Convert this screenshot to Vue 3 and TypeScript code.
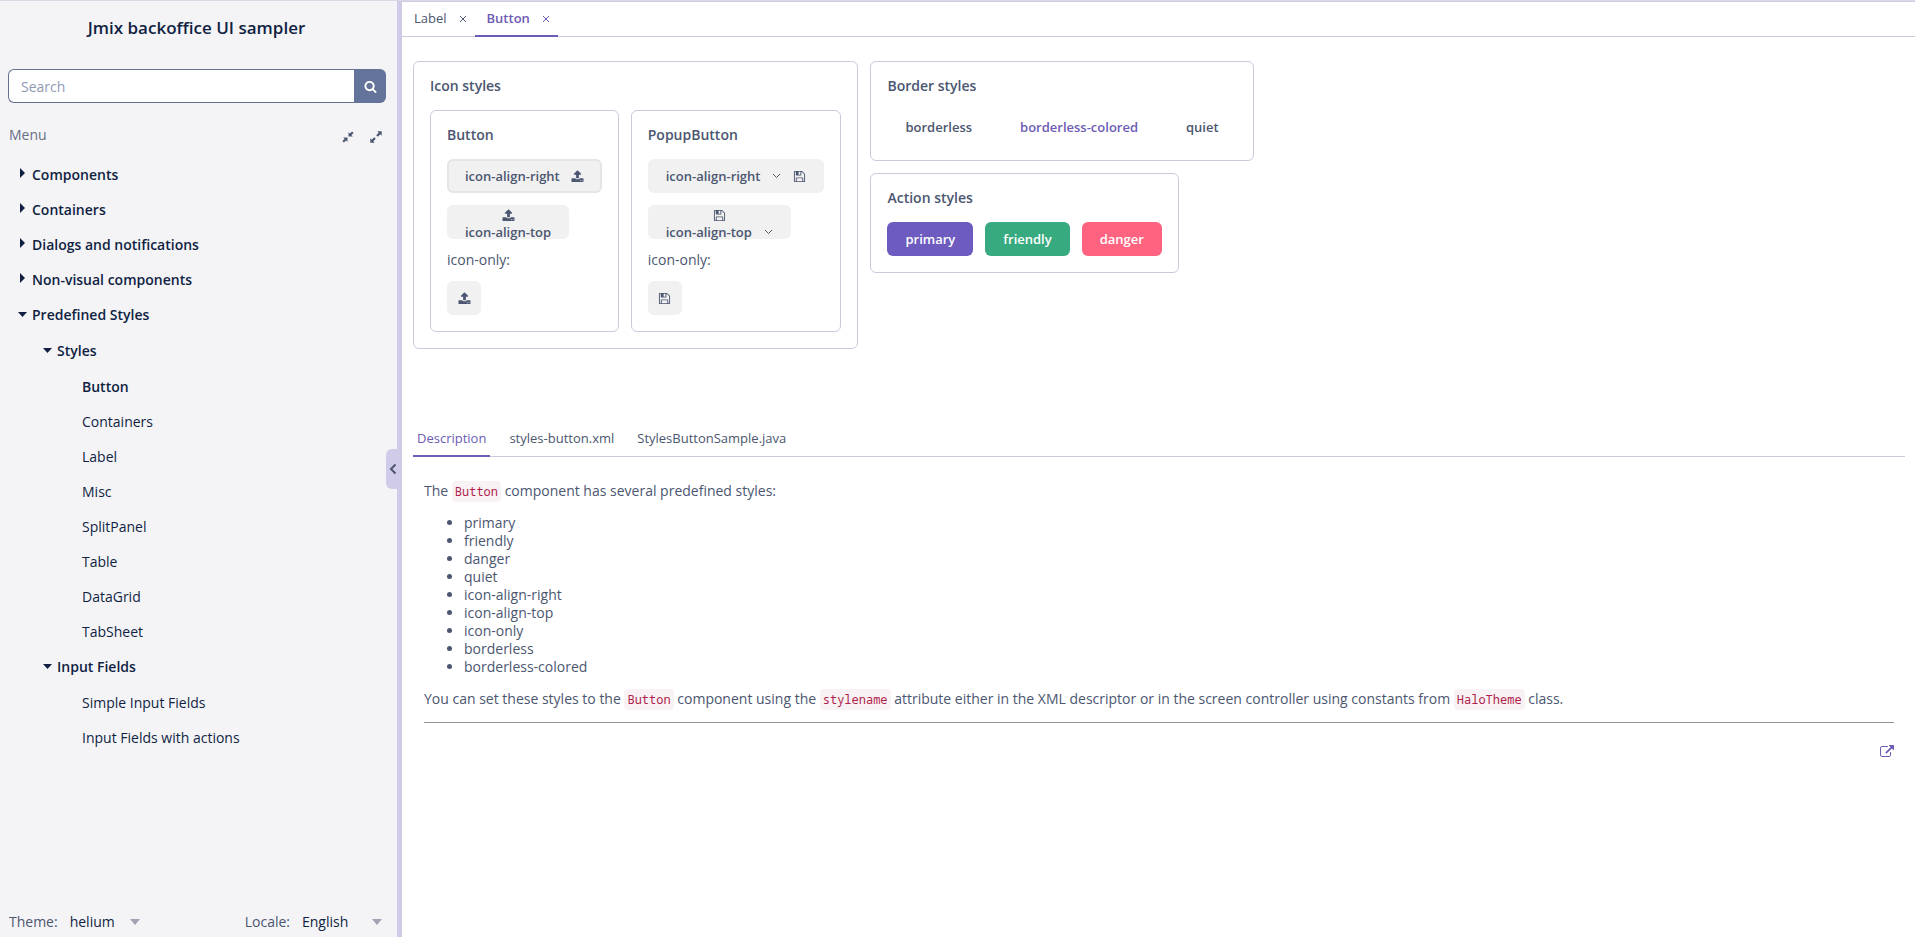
<script setup lang="ts">
import { ref } from 'vue'

interface TreeNode {
  label: string
  children?: TreeNode[]
}

interface Row {
  label: string
  depth: number
  kind: 'open' | 'closed' | 'leaf'
  first: boolean
}

const tree: TreeNode[] = [
  { label: 'Components', children: [] },
  { label: 'Containers', children: [] },
  { label: 'Dialogs and notifications', children: [] },
  { label: 'Non-visual components', children: [] },
  {
    label: 'Predefined Styles',
    children: [
      {
        label: 'Styles',
        children: ['Button', 'Containers', 'Label', 'Misc', 'SplitPanel', 'Table', 'DataGrid', 'TabSheet'].map(
          (label) => ({ label }),
        ),
      },
      {
        label: 'Input Fields',
        children: [{ label: 'Simple Input Fields' }, { label: 'Input Fields with actions' }],
      },
    ],
  },
]

function flatten(nodes: TreeNode[], depth: number): Row[] {
  return nodes.flatMap((node, index) => {
    const kind: Row['kind'] = !node.children ? 'leaf' : node.children.length ? 'open' : 'closed'
    const row: Row = { label: node.label, depth, kind, first: depth > 0 && index === 0 }
    return [row, ...flatten(node.children ?? [], depth + 1)]
  })
}

const rows = flatten(tree, 0)
const selected = ref('Button')
const search = ref('')
const theme = ref('helium')
const locale = ref('English')

const styleNames = [
  'primary',
  'friendly',
  'danger',
  'quiet',
  'icon-align-right',
  'icon-align-top',
  'icon-only',
  'borderless',
  'borderless-colored',
]

const icons = {
  upload:
    'M1344 1472q0-26-19-45t-45-19-45 19-19 45 19 45 45 19 45-19 19-45zm256 0q0-26-19-45t-45-19-45 19-19 45 19 45 45 19 45-19 19-45zm128-224v320q0 40-28 68t-68 28h-1472q-40 0-68-28t-28-68v-320q0-40 28-68t68-28h427q21 56 70.5 92t110.5 36h256q61 0 110.5-36t70.5-92h427q40 0 68 28t28 68zm-325-648q-17 40-59 40h-256v448q0 26-19 45t-45 19h-256q-26 0-45-19t-19-45v-448h-256q-42 0-59-40-17-39 14-69l448-448q18-19 45-19t45 19l448 448q31 30 14 69z',
  save: 'M512 1536h768v-384h-768v384zm896 0h128v-896q0-14-10-38.5t-20-34.5l-281-281q-10-10-34-20t-39-10v416q0 40-28 68t-68 28h-576q-40 0-68-28t-28-68v-416h-128v1280h128v-416q0-40 28-68t68-28h832q40 0 68 28t28 68v416zm-384-928v-320q0-13-9.5-22.5t-22.5-9.5h-192q-13 0-22.5 9.5t-9.5 22.5v320q0 13 9.5 22.5t22.5 9.5h192q13 0 22.5-9.5t9.5-22.5zm640 32v928q0 40-28 68t-68 28h-1344q-40 0-68-28t-28-68v-1344q0-40 28-68t68-28h928q40 0 88 20t76 48l280 280q28 28 48 76t20 88z',
  search:
    'M1216 832q0-185-131.5-316.5t-316.5-131.5-316.5 131.5-131.5 316.5 131.5 316.5 316.5 131.5 316.5-131.5 131.5-316.5zm512 832q0 52-38 90t-90 38q-54 0-90-38l-343-342q-179 124-399 124-143 0-273.5-55.5t-225-150-150-225-55.5-273.5 55.5-273.5 150-225 225-150 273.5-55.5 273.5 55.5 225 150 150 225 55.5 273.5q0 220-124 399l343 343q37 37 37 90z',
  external:
    'M1408 928v320q0 119-84.5 203.5t-203.5 84.5h-832q-119 0-203.5-84.5t-84.5-203.5v-832q0-119 84.5-203.5t203.5-84.5h704q14 0 23 9t9 23v64q0 14-9 23t-23 9h-704q-66 0-113 47t-47 113v832q0 66 47 113t113 47h832q66 0 113-47t47-113v-320q0-14 9-23t23-9h64q14 0 23 9t9 23zm384-864v512q0 26-19 45t-45 19-45-19l-176-176-652 652q-10 10-23 10t-23-10l-114-114q-10-10-10-23t10-23l652-652-176-176q-19-19-19-45t19-45 45-19h512q26 0 45 19t19 45z',
}
</script>

<template>
  <div class="app">
    <aside class="sidebar">
      <h1 class="title">Jmix backoffice UI sampler</h1>
      <form class="search" @submit.prevent>
        <input v-model="search" class="search-input" type="text" placeholder="Search" aria-label="Search" />
        <button class="search-button" type="submit" aria-label="Run search">
          <svg class="icon" viewBox="0 0 1792 1792"><path :d="icons.search" /></svg>
        </button>
      </form>
      <div class="menu-head">
        <span class="menu-title">Menu</span>
        <button class="tool" type="button" aria-label="Collapse all">
          <svg class="tool-icon" viewBox="0 0 12 12">
            <path d="M6.500 1.200V5.500h4.300L9.400 4.100 11.600 1.900 10.100.4 7.900 2.600zM5.500 10.800V6.500H1.200l1.400 1.400L.4 10.100l1.500 1.500 2.200-2.200z" />
          </svg>
        </button>
        <button class="tool" type="button" aria-label="Expand all">
          <svg class="tool-icon" viewBox="0 0 12 12">
            <path d="M11.700.3v4.400L10.300 3.300 7.800 5.800 6.200 4.200 8.700 1.700 7.300.3zM.3 11.700V7.300l1.400 1.400 2.500-2.500 1.600 1.600-2.500 2.500 1.400 1.400z" />
          </svg>
        </button>
      </div>
      <nav class="tree" aria-label="Menu">
        <a
          v-for="(row, index) in rows"
          :key="index"
          href="#"
          class="row"
          :class="[`depth-${row.depth}`, row.kind, { first: row.first, selected: row.label === selected }]"
          @click.prevent="selected = row.label"
        >
          <svg v-if="row.kind === 'closed'" class="caret" viewBox="0 0 10 10"><path d="M3 0l5 5-5 5z" /></svg>
          <svg v-else-if="row.kind === 'open'" class="caret" viewBox="0 0 10 10"><path d="M1 2h9l-4.500 5z" /></svg>
          <span>{{ row.label }}</span>
        </a>
      </nav>
      <footer class="settings">
        <label class="setting-label" for="theme">Theme:</label>
        <span class="select-wrap theme">
          <select id="theme" v-model="theme" class="select">
            <option>helium</option>
          </select>
          <svg class="select-arrow" viewBox="0 0 10 6"><path d="M0 0h10L5 6z" /></svg>
        </span>
        <label class="setting-label locale-label" for="locale">Locale:</label>
        <span class="select-wrap locale">
          <select id="locale" v-model="locale" class="select">
            <option>English</option>
          </select>
          <svg class="select-arrow" viewBox="0 0 10 6"><path d="M0 0h10L5 6z" /></svg>
        </span>
      </footer>
      <button class="handle" type="button" aria-label="Hide menu">
        <svg class="handle-icon" viewBox="0 0 8 12"><path d="M6.500 1.500L2 6l4.500 4.500" /></svg>
      </button>
    </aside>
    <div class="splitter"></div>

    <main class="main">
      <div class="tabs" role="tablist">
        <div class="tab">
          <button class="tab-name" type="button" role="tab">Label</button>
          <button class="tab-close" type="button" aria-label="Close Label">
            <svg class="close-icon" viewBox="0 0 8 8"><path d="M1 1l6 6M7 1L1 7" /></svg>
          </button>
        </div>
        <div class="tab active">
          <button class="tab-name" type="button" role="tab" aria-selected="true">Button</button>
          <button class="tab-close" type="button" aria-label="Close Button">
            <svg class="close-icon" viewBox="0 0 8 8"><path d="M1 1l6 6M7 1L1 7" /></svg>
          </button>
        </div>
      </div>

      <section class="sample">
        <div class="box">
          <h2 class="caption">Icon styles</h2>
          <div class="line">
            <div class="box">
              <h3 class="caption">Button</h3>
              <div class="stack">
                <button class="btn outlined" type="button">
                  icon-align-right
                  <svg class="icon" viewBox="0 0 1792 1792"><path :d="icons.upload" /></svg>
                </button>
                <button class="btn top" type="button">
                  <svg class="icon" viewBox="0 0 1792 1792"><path :d="icons.upload" /></svg>
                  <span>icon-align-top</span>
                </button>
                <span class="label">icon-only:</span>
                <button class="btn icon-only" type="button" aria-label="Upload">
                  <svg class="icon" viewBox="0 0 1792 1792"><path :d="icons.upload" /></svg>
                </button>
              </div>
            </div>
            <div class="box">
              <h3 class="caption">PopupButton</h3>
              <div class="stack">
                <button class="btn popup" type="button">
                  icon-align-right
                  <svg class="chevron" viewBox="0 0 9 6"><path d="M1 1l3.500 3.500L8 1" /></svg>
                  <svg class="icon" viewBox="0 0 1792 1792"><path :d="icons.save" /></svg>
                </button>
                <button class="btn top" type="button">
                  <svg class="icon" viewBox="0 0 1792 1792"><path :d="icons.save" /></svg>
                  <span class="popup-text">
                    icon-align-top
                    <svg class="chevron" viewBox="0 0 9 6"><path d="M1 1l3.500 3.500L8 1" /></svg>
                  </span>
                </button>
                <span class="label">icon-only:</span>
                <button class="btn icon-only" type="button" aria-label="Save">
                  <svg class="icon" viewBox="0 0 1792 1792"><path :d="icons.save" /></svg>
                </button>
              </div>
            </div>
          </div>
        </div>
        <div class="column">
          <div class="box">
            <h2 class="caption">Border styles</h2>
            <div class="line">
              <button class="btn plain" type="button">borderless</button>
              <button class="btn plain colored" type="button">borderless-colored</button>
              <button class="btn plain" type="button">quiet</button>
            </div>
          </div>
          <div class="box">
            <h2 class="caption">Action styles</h2>
            <div class="line">
              <button class="btn primary" type="button">primary</button>
              <button class="btn friendly" type="button">friendly</button>
              <button class="btn danger" type="button">danger</button>
            </div>
          </div>
        </div>
      </section>

      <section class="details">
        <div class="doc-tabs" role="tablist">
          <button class="doc-tab active" type="button" role="tab" aria-selected="true">Description</button>
          <button class="doc-tab" type="button" role="tab">styles-button.xml</button>
          <button class="doc-tab" type="button" role="tab">StylesButtonSample.java</button>
        </div>
        <div class="doc">
          <p>The <code>Button</code> component has several predefined styles:</p>
          <ul>
            <li v-for="name in styleNames" :key="name">{{ name }}</li>
          </ul>
          <p>
            You can set these styles to the <code>Button</code> component using the <code>stylename</code> attribute
            either in the XML descriptor or in the screen controller using constants from
            <code>HaloTheme</code> class.
          </p>
          <hr />
          <a class="external" href="#" aria-label="Open documentation">
            <svg class="external-icon" viewBox="0 0 1792 1792"><path :d="icons.external" /></svg>
          </a>
        </div>
      </section>
    </main>
  </div>
</template>

<style>
body {
  margin: 0;
}
</style>

<style scoped>
.app {
  --text: #4b5670;
  --dark: #101f42;
  --violet: #6d5bb5;
  --line: #ccc9df;
  display: flex;
  min-height: 100vh;
  box-sizing: border-box;
  border-top: 1px solid #d9d8e2;
  background: #fff;
  color: var(--text);
  font-family: 'Open Sans', 'Noto Sans', sans-serif;
  font-size: 14px;
  line-height: 18px;
  font-weight: 400;
}

button,
input,
select {
  margin: 0;
  padding: 0;
  border: 0;
  background: none;
  color: inherit;
  font: inherit;
}

button {
  cursor: pointer;
}

svg {
  display: block;
  flex: none;
  fill: currentColor;
}

.icon {
  width: 13px;
  height: 13px;
}

/* Sidebar */
.sidebar {
  position: relative;
  display: flex;
  flex-direction: column;
  flex: none;
  width: 397px;
  box-sizing: border-box;
  background: #f4f4f7;
}

.splitter {
  flex: none;
  width: 4px;
  background: #d0cbe8;
}

.title {
  margin: 16px 4px 0 0;
  color: var(--dark);
  font-size: 17px;
  line-height: 22px;
  font-weight: 600;
  text-align: center;
}

.search {
  display: flex;
  height: 34px;
  margin: 30px 11px 0 8px;
}

.search-input {
  flex: 1;
  min-width: 0;
  padding: 1px 12px 0;
  border: 1px solid #64708c;
  border-right: 0;
  border-radius: 6px 0 0 6px;
  background: #fff;
}

.search-input::placeholder {
  color: #8f9ab3;
  opacity: 1;
}

.search-button {
  display: flex;
  align-items: center;
  justify-content: center;
  width: 32px;
  border-radius: 0 6px 6px 0;
  background: #64739a;
  color: #fff;
}

.menu-head {
  display: flex;
  align-items: center;
  gap: 16px;
  margin: 22px 15px 0 9px;
  line-height: 20px;
}

.menu-title {
  flex: 1;
  color: #666f85;
}

.tool {
  padding-top: 4px;
}

.tool-icon {
  width: 12px;
  height: 12px;
}

.tree {
  display: flex;
  flex-direction: column;
  flex: 1;
  margin-top: 12px;
}

.row {
  display: flex;
  align-items: center;
  gap: 5px;
  color: var(--dark);
  line-height: 35px;
  text-decoration: none;
}

.first {
  padding-top: 1px;
}

.depth-0 {
  padding-left: 17px;
}

.depth-1 {
  padding-left: 42px;
}

.depth-2 {
  padding-left: 82px;
}

.open,
.closed,
.leaf.selected {
  font-weight: 600;
}

.caret {
  width: 10px;
  height: 10px;
}

.closed .caret {
  margin-bottom: 3px;
}

.settings {
  display: flex;
  align-items: center;
  padding: 0 15px 5px 9px;
  line-height: 20px;
}

.setting-label {
  font-weight: 500;
}

.select-wrap {
  display: flex;
  align-items: center;
  margin-left: 12px;
  color: var(--dark);
}

.select {
  flex: 1;
  min-width: 0;
  appearance: none;
  line-height: 20px;
}

.theme {
  width: 70px;
}

.locale {
  width: 80px;
}

.locale-label {
  margin-left: auto;
}

.select-arrow {
  width: 10px;
  height: 6px;
  fill: #a3a1b5;
}

.handle {
  position: absolute;
  top: 448px;
  right: 0;
  display: flex;
  align-items: center;
  justify-content: center;
  width: 11px;
  height: 40px;
  border-radius: 6px 0 0 6px;
  background: #d0cbe8;
}

.handle-icon {
  width: 8px;
  height: 12px;
  margin-left: 2px;
  fill: none;
  stroke: #4b5670;
  stroke-width: 2;
}

/* Main area */
.main {
  flex: 1;
  min-width: 0;
  border-top: 1px solid #d0cbe8;
  border-left: 1px solid var(--line);
}

.tabs {
  display: flex;
  height: 34px;
  border-bottom: 1px solid var(--line);
}

.tab {
  display: flex;
  align-items: center;
  gap: 12px;
  box-sizing: border-box;
  height: 35px;
  padding: 0 8px 2px 12px;
  border-bottom: 2px solid transparent;
  font-size: 13px;
}

.tab.active {
  border-bottom-color: var(--violet);
  color: var(--violet);
  font-weight: 600;
}

.tab-close {
  padding-top: 2px;
}

.close-icon {
  width: 8px;
  height: 8px;
  fill: none;
  stroke: currentColor;
}

.sample {
  display: flex;
  align-items: flex-start;
  gap: 12px;
  padding: 24px 11px 0;
}

.column {
  display: flex;
  flex-direction: column;
  align-items: flex-start;
  gap: 12px;
}

.line {
  display: flex;
  gap: 12px;
}

.box {
  padding: 15px 16px 16px;
  border: 1px solid var(--line);
  border-radius: 6px;
}

.caption {
  margin: 0 0 15px;
  font-size: 14px;
  line-height: 18px;
  font-weight: 600;
}

.stack {
  display: flex;
  flex-direction: column;
  align-items: flex-start;
  gap: 12px;
}

.btn {
  display: flex;
  align-items: center;
  gap: 11px;
  box-sizing: border-box;
  height: 34px;
  padding: 0 18px;
  border-radius: 6px;
  background: #f1f1f1;
  font-size: 13px;
  font-weight: 600;
}

.outlined {
  padding: 0 16px;
  border: 2px solid #e5e5e7;
}

.popup,
.popup-text {
  display: flex;
  align-items: center;
  gap: 12px;
}

.top {
  flex-direction: column;
  justify-content: flex-start;
  gap: 1px;
  padding-top: 4px;
}

.chevron {
  width: 9px;
  height: 6px;
  fill: none;
  stroke: currentColor;
}

.icon-only {
  justify-content: center;
  width: 34px;
  padding: 0;
}

.plain {
  background: none;
}

.colored {
  color: var(--violet);
}

.primary,
.friendly,
.danger {
  color: #fff;
}

.primary {
  background: #6d5bc0;
}

.friendly {
  background: #37aa7f;
}

.danger {
  background: #ff637f;
}

/* Description */
.details {
  margin: 72px 10px 0 11px;
}

.doc-tabs {
  display: flex;
  gap: 15px;
  height: 35px;
  border-bottom: 1px solid var(--line);
}

.doc-tab {
  box-sizing: border-box;
  height: 36px;
  padding: 0 4px 1px;
  border-bottom: 2px solid transparent;
  font-size: 13px;
}

.doc-tab.active {
  border-bottom-color: var(--violet);
  color: var(--violet);
}

.doc {
  padding: 24px 11px 0;
}

.doc p {
  margin: 0;
  line-height: 20px;
}

.doc ul {
  margin: 12px 0 13px;
  padding-left: 40px;
}

.doc code {
  padding: 2px 3px;
  border-radius: 4px;
  background: #f9f2f4;
  color: #b01e4c;
  font-family: 'Noto Sans Mono', 'DejaVu Sans Mono', monospace;
  font-size: 12px;
  font-weight: 400;
}

.doc hr {
  height: 1px;
  margin: 12px 0 0;
  border: 0;
  background: #94969c;
}

.external {
  display: block;
  width: 14px;
  margin: 22px 0 0 auto;
  color: var(--violet);
}

.external-icon {
  width: 14px;
  height: 14px;
}
</style>
